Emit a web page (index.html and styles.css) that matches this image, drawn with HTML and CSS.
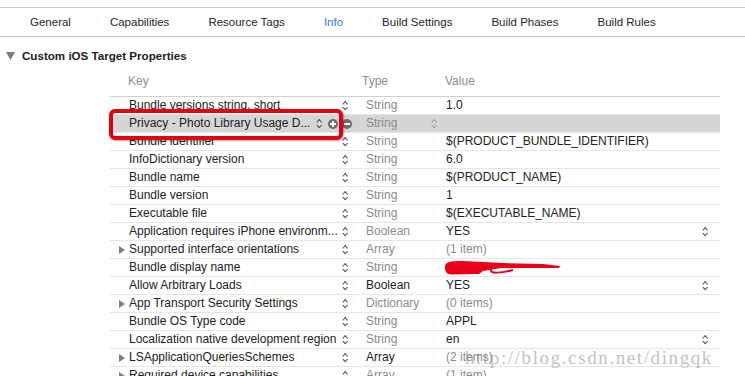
FILE: index.html
```html
<!DOCTYPE html>
<html lang="en">
<head>
    <meta charset="UTF-8">
    <title>Info</title>
    <link rel="stylesheet" href="styles.css">
</head>
<body>

    <!-- Target editor tabs -->
    <div class="tabs">
        <span class="tab">General</span>
        <span class="tab">Capabilities</span>
        <span class="tab">Resource Tags</span>
        <span class="tab active">Info</span>
        <span class="tab">Build Settings</span>
        <span class="tab">Build Phases</span>
        <span class="tab">Build Rules</span>
    </div>

    <div class="section">
        <svg class="caret" width="9" height="8" viewBox="0 0 9 8"><polygon points="0,0 9,0 4.5,8" fill="#7b7b7b"/></svg>
        <span>Custom iOS Target Properties</span>
    </div>

    <div class="plist">
        <div class="row head">
            <div class="key">Key</div>
            <div class="type">Type</div>
            <div class="value">Value</div>
        </div>

        <div class="row">
            <div class="key"><span class="disc"></span><span class="name">Bundle versions string, short</span><span class="updown"></span></div>
            <div class="type">String</div>
            <div class="value">1.0</div>
        </div>
        <div class="row selected">
            <div class="key"><span class="disc"></span><span class="name">Privacy - Photo Library Usage D...</span><span class="updown"></span><span class="add"></span><span class="remove"></span></div>
            <div class="type">String<span class="updown light"></span></div>
            <div class="value"></div>
        </div>
        <div class="row">
            <div class="key"><span class="disc"></span><span class="name">Bundle identifier</span><span class="updown"></span></div>
            <div class="type">String</div>
            <div class="value">$(PRODUCT_BUNDLE_IDENTIFIER)</div>
        </div>
        <div class="row">
            <div class="key"><span class="disc"></span><span class="name">InfoDictionary version</span><span class="updown"></span></div>
            <div class="type">String</div>
            <div class="value">6.0</div>
        </div>
        <div class="row">
            <div class="key"><span class="disc"></span><span class="name">Bundle name</span><span class="updown"></span></div>
            <div class="type">String</div>
            <div class="value">$(PRODUCT_NAME)</div>
        </div>
        <div class="row">
            <div class="key"><span class="disc"></span><span class="name">Bundle version</span><span class="updown"></span></div>
            <div class="type">String</div>
            <div class="value">1</div>
        </div>
        <div class="row">
            <div class="key"><span class="disc"></span><span class="name">Executable file</span><span class="updown"></span></div>
            <div class="type">String</div>
            <div class="value">$(EXECUTABLE_NAME)</div>
        </div>
        <div class="row">
            <div class="key"><span class="disc"></span><span class="name">Application requires iPhone environm...</span><span class="updown"></span></div>
            <div class="type">Boolean</div>
            <div class="value">YES<span class="updown"></span></div>
        </div>
        <div class="row">
            <div class="key"><span class="disc open"></span><span class="name">Supported interface orientations</span><span class="updown"></span></div>
            <div class="type">Array</div>
            <div class="value muted">(1 item)</div>
        </div>
        <div class="row">
            <div class="key"><span class="disc"></span><span class="name">Bundle display name</span><span class="updown"></span></div>
            <div class="type">String</div>
            <div class="value"></div>
        </div>
        <div class="row">
            <div class="key"><span class="disc"></span><span class="name">Allow Arbitrary Loads</span><span class="updown"></span></div>
            <div class="type dark">Boolean</div>
            <div class="value">YES<span class="updown"></span></div>
        </div>
        <div class="row">
            <div class="key"><span class="disc open"></span><span class="name">App Transport Security Settings</span><span class="updown"></span></div>
            <div class="type">Dictionary</div>
            <div class="value muted">(0 items)</div>
        </div>
        <div class="row">
            <div class="key"><span class="disc"></span><span class="name">Bundle OS Type code</span><span class="updown"></span></div>
            <div class="type">String</div>
            <div class="value">APPL</div>
        </div>
        <div class="row">
            <div class="key"><span class="disc"></span><span class="name">Localization native development region</span><span class="updown"></span></div>
            <div class="type">String</div>
            <div class="value">en<span class="updown"></span></div>
        </div>
        <div class="row">
            <div class="key"><span class="disc open"></span><span class="name">LSApplicationQueriesSchemes</span><span class="updown"></span></div>
            <div class="type dark">Array</div>
            <div class="value muted">(2 items)</div>
        </div>
        <div class="row">
            <div class="key"><span class="disc open"></span><span class="name">Required device capabilities</span><span class="updown"></span></div>
            <div class="type">Array</div>
            <div class="value muted">(1 item)</div>
        </div>

        <!-- annotations drawn over the table -->
        <div class="callout"></div>
        <svg class="scribble" width="122" height="16" viewBox="0 0 122 16">
            <path d="M2 7 C2 2 6 1 20 1 L40 2 L60 3 L100 4 L117 6 L116 8 L80 8 L58 8 L40 11 L36 14 L8 14.5 C3 14 2 11 2 7 Z" fill="#e8001a"/>
            <path d="M40 6 C44 3 50 5 48 10 C47 14 58 13 70 10" fill="none" stroke="#e8001a" stroke-width="2"/>
        </svg>
        <div class="watermark">http://blog.csdn.net/dingqk</div>
    </div>

</body>
</html>
```

FILE: styles.css
```css
body {
    margin: 0;
    font-family: "Liberation Sans", Arial, sans-serif;
    color: #222;
    background-color: #fff;
    overflow: hidden;
}
.tabs {
    display: flex;
    align-items: center;
    gap: 39px;
    margin-top: 7px;
    height: 30px;
    padding-left: 30px;
    box-sizing: border-box;
    border-top: 1px solid #c9c9c9;
    border-bottom: 1px solid #c9c9c9;
    font-size: 11.5px;
    color: #262626;
}
.tab.active {
    color: #2f7bf5;
}
.section {
    display: flex;
    align-items: center;
    height: 33px;
    padding: 4px 0 0 6px;
    box-sizing: border-box;
    font-size: 11.6px;
    font-weight: bold;
}
.caret {
    margin-right: 7px;
}
.plist {
    position: relative;
    margin-left: 110px;
    width: 610px;
}
.row {
    display: grid;
    grid-template-columns: 247px 83px 1fr;
    align-items: center;
    height: 18px;
    box-sizing: border-box;
    border-bottom: 1px solid #e6e6e6;
    font-size: 12px;
    line-height: 17px;
    white-space: nowrap;
}
.row.head {
    height: 27px;
    align-items: start;
    padding-top: 3px;
    border-bottom-color: #d0d0d0;
    color: #8e8e8e;
}
.row.head .key {
    padding-left: 18px;
}
.row.head .type,
.row.head .value {
    padding-left: 5px;
}
.row.selected {
    background-color: #d6d6d6;
}
.key {
    display: flex;
    align-items: center;
    padding: 0 8px 0 9px;
}
.selected .key {
    padding-right: 5px;
}
.disc {
    width: 10px;
    height: 8px;
    flex: none;
}
.disc.open {
    width: 0;
    height: 0;
    margin-right: 4px;
    border-top: 4px solid transparent;
    border-bottom: 4px solid transparent;
    border-left: 6px solid #808080;
}
.name {
    flex: 1;
    overflow: hidden;
}
.type {
    display: flex;
    align-items: center;
    justify-content: space-between;
    padding: 0 2px 0 9px;
    color: #8b8b8b;
}
.type.dark {
    color: #222;
}
.value {
    display: flex;
    align-items: center;
    justify-content: space-between;
    padding: 0 11px 0 6px;
}
.value.muted {
    color: #8b8b8b;
}
.updown {
    position: relative;
    width: 7px;
    height: 11px;
    flex: none;
}
.updown::before,
.updown::after {
    content: "";
    position: absolute;
    left: 1.3px;
    width: 3.4px;
    height: 3.4px;
    border-left: 1.2px solid #505050;
    border-top: 1.2px solid #505050;
}
.updown::before {
    top: 1.6px;
    transform: rotate(45deg);
}
.updown::after {
    bottom: 1.6px;
    transform: rotate(225deg);
}
.updown.light::before,
.updown.light::after {
    border-color: #a0a0a0;
}
.add,
.remove {
    position: relative;
    width: 10px;
    height: 10px;
    flex: none;
    border-radius: 50%;
    background-color: #6d6d6d;
}
.add {
    margin-left: 5px;
}
.remove {
    margin-left: 4px;
}
.add::before,
.add::after,
.remove::before {
    content: "";
    position: absolute;
    left: 2px;
    top: 4px;
    width: 6px;
    height: 2px;
    background-color: #fff;
}
.add::after {
    transform: rotate(90deg);
}
.callout {
    position: absolute;
    left: -1px;
    top: 39px;
    width: 234px;
    height: 31px;
    box-sizing: border-box;
    border: 4px solid #e5000f;
    border-radius: 6px;
    box-shadow: 1px 1px 2px rgba(0, 0, 0, 0.35);
}
.scribble {
    position: absolute;
    left: 333px;
    top: 190px;
}
.watermark {
    position: absolute;
    left: 355px;
    top: 278px;
    font-family: "Liberation Serif", serif;
    font-size: 19px;
    line-height: 20px;
    letter-spacing: 1.6px;
    color: rgba(130, 130, 130, 0.5);
    white-space: nowrap;
}
```
